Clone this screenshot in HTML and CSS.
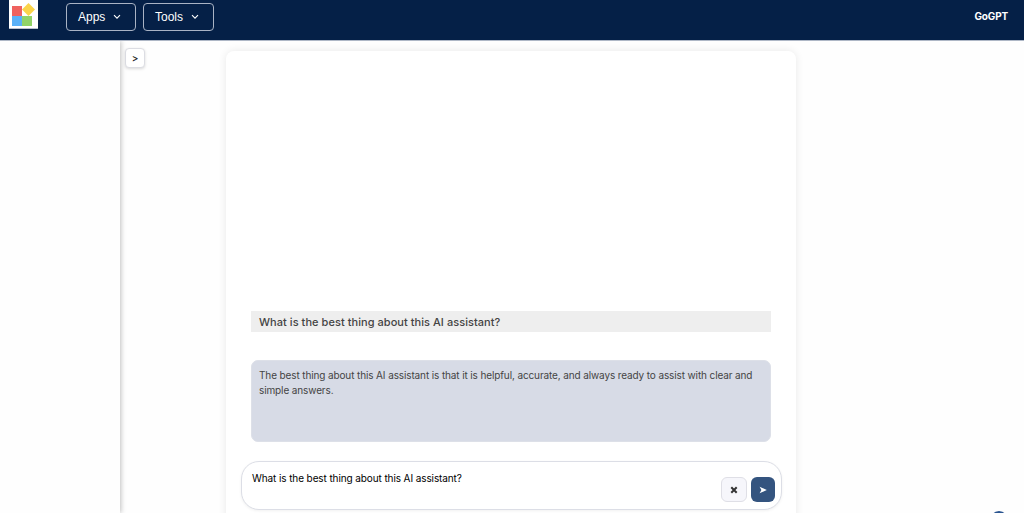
FILE: index.html
```html
<!DOCTYPE html>
<html lang="en">
<head>
    <meta charset="UTF-8">
    <meta name="viewport" content="width=device-width, initial-scale=1.0">
    <title>GoGPT</title>
    <link rel="stylesheet" href="styles.css">
</head>
<body>
    <header class="navbar">
        <a href="#" class="logo">
            <svg width="29" height="29" viewBox="0 0 29 29">
                <rect x="3" y="6" width="10" height="10" fill="#ef625f"/>
                <rect x="3" y="16" width="10" height="10" fill="#5ab1f8"/>
                <rect x="13" y="16" width="10" height="10" fill="#91d368"/>
                <path d="M19.5 3 L26 9.5 L19.5 16 L13 9.5 Z" fill="#fbd449"/>
            </svg>
        </a>
        <nav class="nav-menu">
            <button class="nav-button">Apps
                <svg class="chevron" viewBox="0 0 8 6"><path d="M1 1.2 L4 4.2 L7 1.2"/></svg>
            </button>
            <button class="nav-button">Tools
                <svg class="chevron" viewBox="0 0 8 6"><path d="M1 1.2 L4 4.2 L7 1.2"/></svg>
            </button>
        </nav>
        <span class="brand">GoGPT</span>
    </header>

    <div class="page">
        <aside class="sidebar"></aside>
        <button class="sidebar-toggle">&gt;</button>

        <main class="chat">
            <div class="messages">
                <div class="question">What is the best thing about this AI assistant?</div>
                <div class="answer">The best thing about this AI assistant is that it is helpful, accurate, and always ready to assist with clear and simple answers.</div>
            </div>
            <div class="input-box">
                <div class="input-text">What is the best thing about this AI assistant?</div>
                <button class="clear-button">
                    <svg width="8" height="8" viewBox="0 0 8 8"><path d="M1.3 1.3 L6.7 6.7 M6.7 1.3 L1.3 6.7"/></svg>
                </button>
                <button class="send-button">
                    <svg width="8" height="8" viewBox="0 0 8 8"><path d="M0.6 0.8 L7.8 4 L0.6 7.2 L2.4 4 Z"/></svg>
                </button>
            </div>
        </main>
    </div>

    <!-- Floating help bubble -->
    <div class="help-bubble"></div>
</body>
</html>
```

FILE: styles.css
```css
* {
    box-sizing: border-box;
}
body {
    margin: 0;
    height: 100vh;
    overflow: hidden;
    background: #fefefe;
    font-family: Inter, sans-serif;
    color: #444;
}
button {
    padding: 0;
    font-family: inherit;
}

/* Navbar */
.navbar {
    display: flex;
    align-items: flex-start;
    height: 41px;
    padding: 0 16px 0 9px;
    background: #052047;
    border-bottom: 1px solid #aeb7c6;
}
.logo {
    display: block;
    width: 29px;
    height: 29px;
    background: white;
    border-bottom: 1px solid #b9c1cf;
}
.logo svg {
    display: block;
}
.nav-menu {
    display: flex;
    gap: 7px;
    margin: 3px 0 0 28px;
}
.nav-button {
    display: flex;
    align-items: center;
    justify-content: space-between;
    width: 70px;
    height: 28px;
    padding: 0 14px 1px 11px;
    background: transparent;
    border: 1px solid #a9b3c4;
    border-radius: 4px;
    color: white;
    font-family: "Liberation Sans", Arial, sans-serif;
    font-size: 12px;
}
.nav-button:last-child {
    width: 71px;
}
.chevron {
    width: 8px;
    height: 6px;
    fill: none;
    stroke: white;
    stroke-width: 1.1;
}
.brand {
    margin-left: auto;
    line-height: 33px;
    font-size: 10px;
    font-weight: 700;
    letter-spacing: -0.15px;
    color: white;
}

/* Page */
.page {
    display: flex;
    align-items: flex-start;
    height: 472px;
}
.sidebar {
    width: 120px;
    height: 100%;
    background: #fefefe;
    box-shadow: 1px 0 5px rgba(0, 0, 0, 0.25);
    clip-path: inset(0 -10px 0 0);
}
.sidebar-toggle {
    width: 20px;
    height: 20px;
    margin: 7px 0 0 5px;
    background: white;
    border: 1px solid #dcdde3;
    border-radius: 4px;
    box-shadow: 0 1px 3px rgba(0, 0, 0, 0.15);
    color: #222;
    font-size: 10px;
    font-weight: 500;
}

/* Chat */
.chat {
    display: flex;
    flex-direction: column;
    width: 570px;
    height: 480px;
    margin: 10px 0 0 81px;
    padding: 0 14px 0 15px;
    background: white;
    border-radius: 8px;
    box-shadow: 0 0 9px rgba(0, 0, 0, 0.09);
}
.messages {
    display: flex;
    flex-direction: column;
    justify-content: flex-end;
    gap: 28px;
    height: 391px;
    padding: 0 11px 0 10px;
}
.question {
    height: 21px;
    padding-left: 8px;
    background: #eee;
    line-height: 22px;
    font-size: 11px;
    font-weight: 500;
    letter-spacing: 0.05px;
}
.answer {
    height: 82px;
    padding: 7px;
    background: #d7dbe6;
    border: 1px solid #dde0e8;
    border-radius: 7px;
    line-height: 15px;
    font-size: 10px;
    letter-spacing: -0.12px;
}
.input-box {
    display: flex;
    align-items: flex-end;
    gap: 4px;
    height: 49px;
    margin-top: 19px;
    padding: 0 6px 7px 10px;
    background: white;
    border: 1px solid #dcdee6;
    border-radius: 18px;
    box-shadow: 0 1px 3px rgba(0, 0, 0, 0.06);
}
.input-text {
    flex: 1;
    align-self: flex-start;
    padding-top: 9px;
    line-height: 14px;
    font-size: 10px;
    letter-spacing: -0.1px;
    color: black;
}
.clear-button,
.send-button {
    display: flex;
    align-items: center;
    justify-content: center;
    height: 25px;
    border-radius: 6px;
}
.clear-button {
    width: 26px;
    background: #f6f6fb;
    border: 1px solid #dfdfe6;
}
.clear-button path {
    stroke: #333;
    stroke-width: 2;
}
.send-button {
    width: 24px;
    background: #34547f;
    border: none;
}
.send-button path {
    fill: white;
}

.help-bubble {
    position: fixed;
    right: 16px;
    bottom: -16px;
    width: 18px;
    height: 18px;
    border-radius: 50%;
    background: #2a5590;
}
```
